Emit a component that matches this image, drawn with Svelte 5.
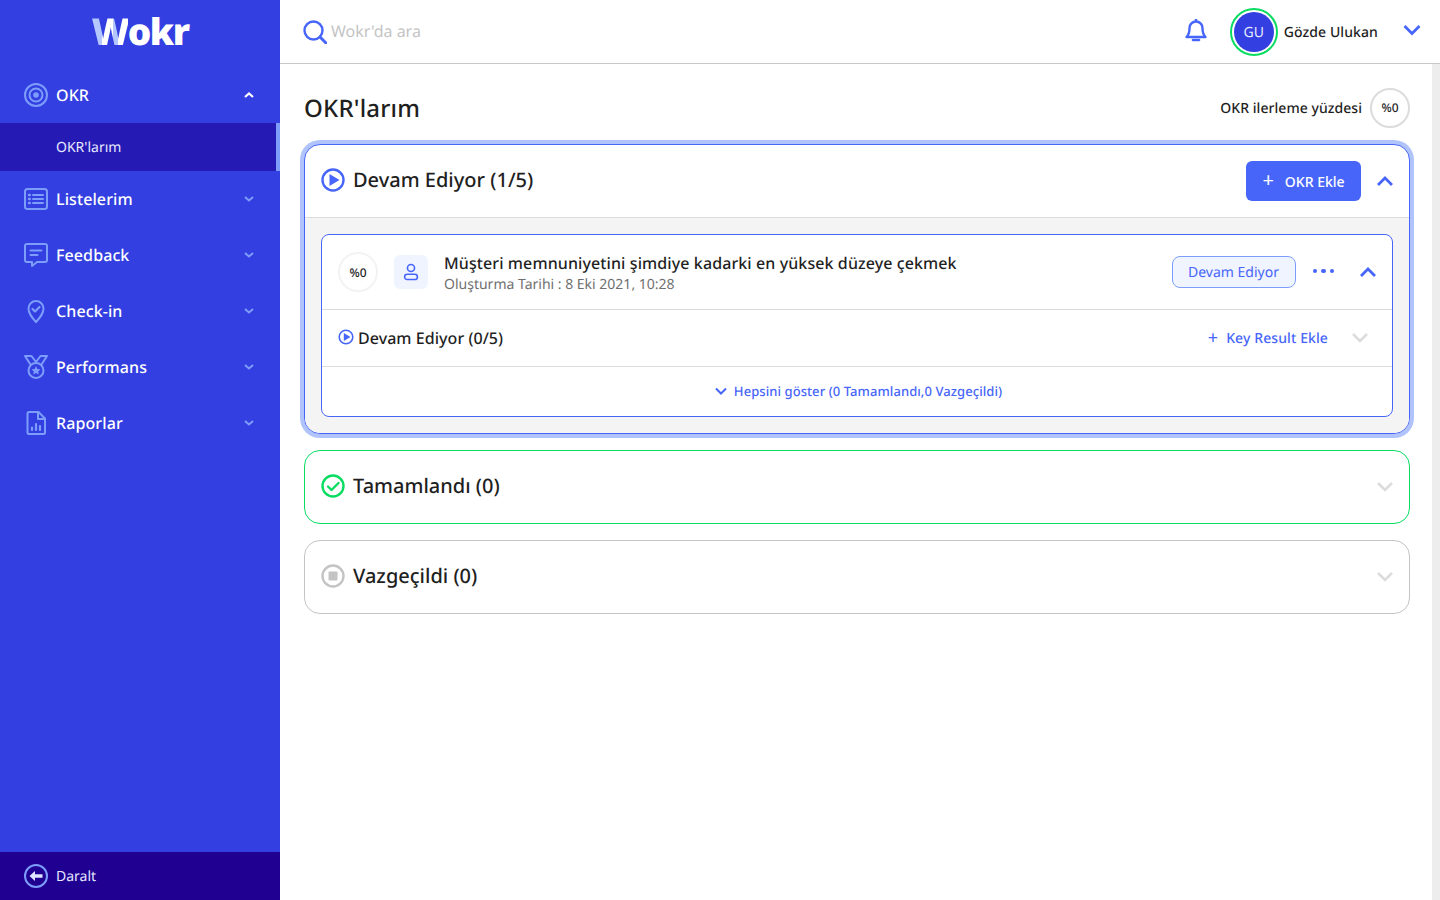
<script>
    const menu = [
        { label: "Listelerim", icon: "list" },
        { label: "Feedback", icon: "feedback" },
        { label: "Check-in", icon: "check" },
        { label: "Performans", icon: "medal" },
        { label: "Raporlar", icon: "report" },
    ];
</script>

<div class="app">
    <aside class="sidebar">
        <div class="logo"><span class="logo-w">W</span>okr</div>
        <nav class="menu">
            <div class="menu-item">
                <svg class="menu-icon" viewBox="0 0 24 24" fill="none" stroke="#7d9dfb" stroke-width="2">
                    <circle cx="12" cy="12" r="11" />
                    <circle cx="12" cy="12" r="6.5" />
                    <circle cx="12" cy="12" r="2.8" fill="#7d9dfb" stroke="none" />
                </svg>
                <span class="menu-label">OKR</span>
                <svg class="menu-caret" viewBox="0 0 10 6" fill="none" stroke="#fff" stroke-width="2.200"><path d="M1 5l4-3.500L9 5" /></svg>
            </div>
            <div class="submenu-item">OKR'larım</div>
            {#each menu as item}
                <div class="menu-item">
                    <svg class="menu-icon" viewBox="0 0 24 24" fill="none" stroke="#7d9dfb" stroke-width="2" stroke-linejoin="round" stroke-linecap="round">
                        {#if item.icon === "list"}
                            <rect x="1" y="2" width="22" height="20" rx="2.5" />
                            <path d="M9 8h10M9 12h10M9 16h10" />
                            <path d="M5 8h.8M5 12h.8M5 16h.8" stroke-width="2.4" />
                        {:else if item.icon === "feedback"}
                            <path d="M3 1h18a2 2 0 0 1 2 2v14a2 2 0 0 1-2 2H13l-5 4v-4H3a2 2 0 0 1-2-2V3a2 2 0 0 1 2-2z" />
                            <path d="M6.500 7.500h11M6.500 12h7" />
                        {:else if item.icon === "check"}
                            <path d="M12 23C7.500 18 4.500 14.500 4.500 9.500a7.500 7.500 0 0 1 15 0C19.500 14.500 16.500 18 12 23z" />
                            <path d="M8.500 10l2.500 2.500 4.500-4.500" stroke-width="2.200" />
                        {:else if item.icon === "medal"}
                            <path d="M6.500 9.500L1 1h6.500l4.500 6 4.500-6H23l-5.500 8.500" />
                            <circle cx="12" cy="15.500" r="7.500" />
                            <path d="M12 11l1.400 2.900 3.100.4-2.300 2.100.6 3.100-2.800-1.500-2.800 1.500.6-3.100-2.300-2.100 3.100-.4z" fill="#7d9dfb" stroke="none" />
                        {:else}
                            <path d="M5 1h9.500L21 7.500V21.500a1.500 1.500 0 0 1-1.500 1.500h-15A1.500 1.500 0 0 1 3.500 21.500V2.500A1.500 1.500 0 0 1 5 1z" />
                            <path d="M14 1v7h7" />
                            <path d="M8 19v-2.500M12 19v-6M16 19v-4" stroke-width="2.200" />
                        {/if}
                    </svg>
                    <span class="menu-label">{item.label}</span>
                    <svg class="menu-caret" viewBox="0 0 10 6" fill="none" stroke="#7d9dfb" stroke-width="2"><path d="M1 1l4 3.500L9 1" /></svg>
                </div>
            {/each}
        </nav>
        <div class="collapse">
            <svg class="menu-icon" viewBox="0 0 24 24" fill="none" stroke="#7d9dfb" stroke-width="2">
                <circle cx="12" cy="12" r="11" />
                <path d="M5.500 12l5.500-5v3.200h7.500v3.600H11V17z" fill="#dfe5ff" stroke="none" />
            </svg>
            <span>Daralt</span>
        </div>
    </aside>

    <div class="content">
        <header class="topbar">
            <svg class="search-icon" viewBox="0 0 24 24" fill="none" stroke="#4766f9" stroke-width="2.400" stroke-linecap="round">
                <circle cx="10.500" cy="10.500" r="9" />
                <path d="M17 17l6 6" stroke-width="3" />
            </svg>
            <span class="search-text">Wokr'da ara</span>
            <svg class="bell" viewBox="0 0 22 24" fill="none" stroke="#4766f9" stroke-width="2.400" stroke-linejoin="round">
                <path d="M11 3.500a6.500 6.500 0 0 0-6.500 6.500c0 5-1 7-3 9h19c-2-2-3-4-3-9A6.500 6.500 0 0 0 11 3.500z" />
                <path d="M11 1v2.500" />
                <path d="M8 22h6" stroke-width="2.600" stroke-linecap="round" />
            </svg>
            <div class="avatar"><span>GU</span></div>
            <span class="username">Gözde Ulukan</span>
            <svg class="user-caret" viewBox="0 0 18 12" fill="none" stroke="#4766f9" stroke-width="2.800"><path d="M1.500 2l7.500 7.500L16.500 2" /></svg>
        </header>

        <div class="page">
            <main class="main">
                <div class="title-row">
                    <h1>OKR'larım</h1>
                    <span class="progress-label">OKR ilerleme yüzdesi</span>
                    <div class="percent big">%0</div>
                </div>

                <section class="group active">
                    <div class="group-head first">
                        <svg class="status" viewBox="0 0 24 24"><circle cx="12" cy="12" r="10.500" fill="none" stroke="#4766f9" stroke-width="2.400" /><path d="M8.500 6v12L18.500 12z" fill="#4766f9" /></svg>
                        <h2>Devam Ediyor (1/5)</h2>
                        <button class="add-btn"><span class="plus">+</span>OKR Ekle</button>
                        <svg class="caret" viewBox="0 0 18 12" fill="none" stroke="#4766f9" stroke-width="2.800"><path d="M2 10l7-7 7 7" /></svg>
                    </div>
                    <div class="group-body">
                        <div class="okr">
                            <div class="okr-top">
                                <div class="percent small">%0</div>
                                <div class="owner">
                                    <svg viewBox="0 0 18 20" fill="none" stroke="#4766f9" stroke-width="1.800"><circle cx="9" cy="5.500" r="4" /><rect x="1.800" y="12.500" width="14.400" height="6" rx="3" /></svg>
                                </div>
                                <div class="okr-text">
                                    <div class="okr-title">Müşteri memnuniyetini şimdiye kadarki en yüksek düzeye çekmek</div>
                                    <div class="okr-date">Oluşturma Tarihi : 8 Eki 2021, 10:28</div>
                                </div>
                                <span class="badge">Devam Ediyor</span>
                                <div class="dots"><i></i><i></i><i></i></div>
                                <svg class="caret inner" viewBox="0 0 18 12" fill="none" stroke="#4766f9" stroke-width="2.800"><path d="M2 10l7-7 7 7" /></svg>
                            </div>
                            <div class="okr-kr">
                                <svg class="status-small" viewBox="0 0 16 16"><circle cx="8" cy="8" r="6.800" fill="none" stroke="#4766f9" stroke-width="1.600" /><path d="M5.800 4v8L12.500 8z" fill="#4766f9" /></svg>
                                <span class="kr-title">Devam Ediyor (0/5)</span>
                                <span class="kr-add"><span class="kr-plus">+</span>Key Result Ekle</span>
                                <svg class="caret grey" viewBox="0 0 18 12" fill="none" stroke="#dcdcdc" stroke-width="2.600"><path d="M2 2l7 7 7-7" /></svg>
                            </div>
                            <div class="okr-more">
                                <svg viewBox="0 0 12 8" fill="none" stroke="#4766f9" stroke-width="2"><path d="M1 1.500l5 5 5-5" /></svg>
                                Hepsini göster (0 Tamamlandı,0 Vazgeçildi)
                            </div>
                        </div>
                    </div>
                </section>

                <section class="group done">
                    <div class="group-head">
                        <svg class="status" viewBox="0 0 24 24" fill="none" stroke="#0adc62" stroke-width="2.400"><circle cx="12" cy="12" r="10.500" /><path d="M7 12.500l3.500 3.500L17.500 9" stroke-linecap="round" stroke-linejoin="round" /></svg>
                        <h2>Tamamlandı (0)</h2>
                        <svg class="caret end" viewBox="0 0 18 12" fill="none" stroke="#dcdcdc" stroke-width="2.600"><path d="M2 2l7 7 7-7" /></svg>
                    </div>
                </section>

                <section class="group dropped">
                    <div class="group-head">
                        <svg class="status" viewBox="0 0 24 24"><circle cx="12" cy="12" r="10.500" fill="none" stroke="#c4c4c4" stroke-width="2.400" /><rect x="7.500" y="7.500" width="9" height="9" rx="1" fill="#c4c4c4" /></svg>
                        <h2>Vazgeçildi (0)</h2>
                        <svg class="caret end" viewBox="0 0 18 12" fill="none" stroke="#dcdcdc" stroke-width="2.600"><path d="M2 2l7 7 7-7" /></svg>
                    </div>
                </section>
            </main>
            <div class="scrollbar"></div>
        </div>
    </div>
</div>

<style>
    :global(body) {
        margin: 0;
        font-family: "Noto Sans", "Open Sans", sans-serif;
        color: #1f1f1f;
        background: #fff;
        text-rendering: geometricPrecision;
    }

    .app {
        display: flex;
        height: 900px;
        overflow: hidden;
    }

    /* sidebar */
    .sidebar {
        width: 280px;
        flex: none;
        display: flex;
        flex-direction: column;
        background: #333fe0;
        color: #fff;
    }

    .logo {
        height: 67px;
        box-sizing: border-box;
        padding-top: 5px;
        text-align: center;
        font-family: "Noto Sans", sans-serif;
        font-weight: 900;
        font-size: 37px;
        line-height: 52px;
        letter-spacing: -1.5px;
    }

    .logo-w {
        background: linear-gradient(90deg, #b4c8ff 0 30%, #fff 30% 60%, #b4c8ff 60% 72%, #fff 72%);
        -webkit-background-clip: text;
        background-clip: text;
        color: transparent;
    }

    .menu {
        flex: 1;
    }

    .menu-item {
        height: 56px;
        display: flex;
        align-items: center;
        padding: 0 24px;
    }

    .menu-icon {
        width: 24px;
        height: 24px;
        flex: none;
    }

    .menu-label {
        margin-left: 8px;
        font-size: 16px;
        font-weight: 500;
        letter-spacing: 0.1px;
        flex: 1;
    }

    .menu-caret {
        width: 10px;
        height: 6px;
        margin-right: 2px;
    }

    .submenu-item {
        height: 48px;
        box-sizing: border-box;
        padding: 0 0 0 56px;
        display: flex;
        align-items: center;
        font-size: 14px;
        color: #e6e9ff;
        background: #261ab4;
        border-right: 4px solid #7d9dfb;
    }

    .collapse {
        height: 48px;
        display: flex;
        align-items: center;
        gap: 8px;
        padding: 0 24px;
        background: #1f0091;
        font-size: 14px;
        color: #e6e9ff;
    }

    /* top bar */
    .content {
        flex: 1;
        min-width: 0;
        display: flex;
        flex-direction: column;
    }

    .topbar {
        height: 64px;
        box-sizing: border-box;
        flex: none;
        display: flex;
        align-items: center;
        padding: 0 19px 0 23px;
        border-bottom: 1px solid #c8c8c8;
    }

    .search-icon {
        width: 24px;
        height: 24px;
        margin-top: 1px;
    }

    .search-text {
        margin-left: 4px;
        flex: 1;
        font-size: 16px;
        color: #c4c4c4;
        margin-top: -2px;
    }

    .bell {
        width: 22px;
        height: 24px;
        margin-right: 23px;
        margin-top: -3px;
    }

    .avatar {
        width: 48px;
        height: 48px;
        box-sizing: border-box;
        border-radius: 50%;
        border: 2px solid #0adc62;
        padding: 2px;
        margin-right: 6px;
    }

    .avatar span {
        display: flex;
        align-items: center;
        justify-content: center;
        height: 100%;
        border-radius: 50%;
        background: #333fe0;
        color: #e6e9ff;
        font-size: 14px;
        padding-top: 1px;
        box-sizing: border-box;
    }

    .username {
        font-size: 14px;
        font-weight: 500;
        letter-spacing: 0.1px;
        margin-top: 1px;
    }

    .user-caret {
        width: 18px;
        height: 12px;
        margin-left: 25px;
        margin-top: -3px;
    }

    /* page */
    .page {
        flex: 1;
        display: flex;
        min-height: 0;
    }

    .main {
        flex: 1;
        min-width: 0;
        padding: 0 22px 0 24px;
    }

    .scrollbar {
        width: 8px;
        flex: none;
        background: #ededed;
    }

    .title-row {
        height: 80px;
        display: flex;
        align-items: center;
    }

    h1 {
        flex: 1;
        margin: 10px 0 0;
        font-size: 24px;
        font-weight: 500;
        line-height: 32px;
        letter-spacing: 0.2px;
    }

    .progress-label {
        font-size: 14px;
        font-weight: 500;
        letter-spacing: 0.05px;
        margin: 8px 8px 0 0;
    }

    .percent {
        display: flex;
        align-items: center;
        justify-content: center;
        box-sizing: border-box;
        border-radius: 50%;
        font-size: 12px;
        font-weight: 500;
        flex: none;
    }

    .percent.big {
        width: 40px;
        height: 40px;
        margin-top: 8px;
        border: 2px solid #dcdcdc;
        padding-bottom: 1px;
    }

    .percent.small {
        width: 40px;
        height: 40px;
        border: 2px solid #f3f3f3;
    }

    .group {
        border: 1px solid #c4c4c4;
        border-radius: 16px;
        margin-bottom: 16px;
        overflow: hidden;
        background: #fff;
    }

    .group.active {
        border-color: #4766f9;
        box-shadow: 0 0 0 4px #b0c4fb;
    }

    .group.done {
        border-color: #0adc62;
    }

    .group-head {
        height: 72px;
        display: flex;
        align-items: center;
        padding: 0 15px 0 16px;
    }

    .group-head.first {
        border-bottom: 1px solid #dcdcdc;
    }

    .status {
        width: 24px;
        height: 24px;
        flex: none;
        margin-top: -2px;
    }

    h2 {
        flex: 1;
        margin: -2px 0 0 8px;
        font-size: 20px;
        font-weight: 500;
        line-height: 28px;
    }

    .add-btn {
        width: 115px;
        height: 40px;
        border: none;
        border-radius: 6px;
        background: #4766f9;
        color: #fff;
        font: 500 14px "Noto Sans", sans-serif;
        display: flex;
        align-items: center;
        justify-content: center;
        padding: 0;
    }

    .plus {
        font-size: 20px;
        font-weight: 400;
        line-height: 20px;
        margin: -2px 11px 0 0;
    }

    .caret {
        width: 18px;
        height: 12px;
        flex: none;
        margin-left: 15px;
    }

    .group-body {
        background: #f4f4f4;
        padding: 16px;
    }

    .okr {
        border: 1px solid #4766f9;
        border-radius: 8px;
        background: #fff;
    }

    .okr-top {
        height: 74px;
        display: flex;
        align-items: center;
        padding: 0 15px 0 16px;
        border-bottom: 1px solid #dcdcdc;
    }

    .owner {
        width: 34px;
        height: 34px;
        margin-left: 16px;
        border-radius: 6px;
        background: #eff4ff;
        display: flex;
        align-items: center;
        justify-content: center;
        flex: none;
    }

    .owner svg {
        width: 16px;
        height: 18px;
    }

    .okr-text {
        flex: 1;
        margin-left: 16px;
        padding-top: 2px;
    }

    .okr-title {
        font-size: 16px;
        font-weight: 500;
        line-height: 22px;
        letter-spacing: 0.1px;
    }

    .okr-date {
        font-size: 14px;
        line-height: 20px;
        color: #6f6f6f;
        margin-top: 1px;
    }

    .badge {
        width: 124px;
        height: 32px;
        box-sizing: border-box;
        display: flex;
        align-items: center;
        justify-content: center;
        border: 1px solid #7d9dfb;
        border-radius: 8px;
        background: #eff4ff;
        color: #4766f9;
        font-size: 14px;
    }

    .dots {
        display: flex;
        gap: 4px;
        margin-left: 17px;
        margin-top: -2px;
    }

    .dots i {
        width: 4.500px;
        height: 4.500px;
        border-radius: 50%;
        background: #4766f9;
    }

    .caret.inner {
        margin-left: 25px;
    }

    .okr-kr {
        height: 56px;
        display: flex;
        align-items: center;
        padding: 0 23px 0 16px;
        border-bottom: 1px solid #dcdcdc;
    }

    .status-small {
        width: 16px;
        height: 16px;
        margin-top: -3px;
    }

    .kr-title {
        flex: 1;
        margin-left: 4px;
        font-size: 16px;
        font-weight: 500;
        letter-spacing: 0.05px;
    }

    .kr-add {
        color: #4766f9;
        font-size: 14px;
        font-weight: 500;
        letter-spacing: 0.1px;
        display: flex;
        align-items: center;
    }

    .kr-plus {
        font-size: 18px;
        font-weight: 400;
        line-height: 18px;
        margin-right: 8px;
    }

    .caret.grey {
        margin-left: 23px;
    }

    .okr-more {
        height: 49px;
        display: flex;
        align-items: center;
        justify-content: center;
        gap: 7px;
        color: #4766f9;
        font-size: 13px;
        font-weight: 500;
        letter-spacing: 0.07px;
        padding: 0 0 2px 3px;
        box-sizing: border-box;
    }

    .okr-more svg {
        width: 12px;
        height: 8px;
        margin-top: 1px;
    }
</style>
